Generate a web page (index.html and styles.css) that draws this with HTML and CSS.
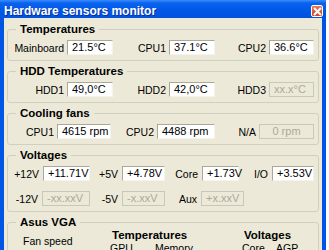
FILE: index.html
```html
<!DOCTYPE html>
<html lang="en">
  <head>
    <meta charset="UTF-8" />
    <title>Hardware sensors monitor</title>
    <link rel="stylesheet" href="styles.css">
  </head>

  <body>
    <div class="window">
      <!-- title bar -->
      <div class="titlebar">
        <span class="title">Hardware sensors monitor</span>
        <span class="close">
          <svg width="9" height="9" viewBox="0 0 9 9">
            <path d="M1 1 L8 8 M8 1 L1 8" stroke="#fff" stroke-width="2" />
          </svg>
        </span>
      </div>

      <div class="body">
        <fieldset class="group">
          <legend>Temperatures</legend>
          <div class="row temps">
            <span class="lbl">Mainboard</span><span class="val">21.5°C</span>
            <span class="lbl">CPU1</span><span class="val">37.1°C</span>
            <span class="lbl">CPU2</span><span class="val">36.6°C</span>
          </div>
        </fieldset>

        <fieldset class="group">
          <legend>HDD Temperatures</legend>
          <div class="row temps">
            <span class="lbl">HDD1</span><span class="val">49,0°C</span>
            <span class="lbl">HDD2</span><span class="val">42,0°C</span>
            <span class="lbl">HDD3</span><span class="val off">xx.x°C</span>
          </div>
        </fieldset>

        <fieldset class="group">
          <legend>Cooling fans</legend>
          <div class="row fans">
            <span class="lbl">CPU1</span><span class="val">4615 rpm</span>
            <span class="lbl">CPU2</span><span class="val">4488 rpm</span>
            <span class="lbl">N/A</span><span class="val off">0 rpm</span>
          </div>
        </fieldset>

        <fieldset class="group">
          <legend>Voltages</legend>
          <div class="row volts1">
            <span class="lbl">+12V</span><span class="val">+11.71V</span>
            <span class="lbl">+5V</span><span class="val">+4.78V</span>
            <span class="lbl">Core</span><span class="val">+1.73V</span>
            <span class="lbl">I/O</span><span class="val">+3.53V</span>
          </div>
          <div class="row volts2">
            <span class="lbl">-12V</span><span class="val off">-xx.xxV</span>
            <span class="lbl">-5V</span><span class="val off">-x.xxV</span>
            <span class="lbl">Aux</span><span class="val off">+x.xxV</span>
          </div>
        </fieldset>

        <fieldset class="group">
          <legend>Asus VGA</legend>
          <div class="vga">
            <div class="fan">Fan speed</div>
            <div class="vcol tcol">
              <div class="head">Temperatures</div>
              <div class="sub"><span>GPU</span><span>Memory</span></div>
            </div>
            <div class="vcol ccol">
              <div class="head">Voltages</div>
              <div class="sub"><span>Core</span><span>AGP</span></div>
            </div>
          </div>
        </fieldset>
      </div>
    </div>
  </body>
</html>
```

FILE: styles.css
```css
html,
body {
  margin: 0;
  padding: 0;
  overflow: hidden;
  background: #fff;
}

body {
  font-family: "Liberation Sans", Arial, sans-serif;
  font-size: 10.5px;
  color: #000;
}

.window {
  width: 326px;
  height: 250px;
  display: flex;
  flex-direction: column;
}

.titlebar {
  height: 18px;
  box-sizing: border-box;
  padding: 4px 3px 0 4px;
  display: flex;
  justify-content: space-between;
  align-items: flex-start;
  background: linear-gradient(to bottom, #3b8dfb 0, #0a62ee 3px, #0058e8 10px, #0052de 18px);
}

.title {
  color: #fff;
  font-weight: bold;
  font-size: 12px;
  line-height: 14px;
  text-shadow: 1px 1px 0 #0a2f9c;
}

.close {
  width: 12px;
  height: 12px;
  margin-top: 1px;
  box-sizing: border-box;
  border: 1px solid #fff;
  border-radius: 2px;
  background: linear-gradient(to bottom, #e8775a, #d8431e);
  display: flex;
  align-items: center;
  justify-content: center;
}

.close svg {
  display: block;
}

.body {
  flex: 1;
  background: #ece9d8;
  border-left: 4px solid #0055e5;
  border-right: 4px solid #0055e5;
  padding-top: 4px;
}

.group {
  margin: 0 3px 3px 3px;
  padding: 0 0 5px 0;
  min-inline-size: 0;
  border: 1px solid #d0d0bf;
  border-radius: 3px;
}

.group legend {
  margin-left: 8px;
  padding: 0 4px;
  font-weight: bold;
  font-size: 11.5px;
  line-height: 14px;
}

.row {
  display: grid;
  align-items: center;
  margin-top: 4px;
}

.row + .row {
  margin-top: 10px;
}

.temps {
  grid-template-columns: 59px 46px 56px 46px 54px 45px;
}

.fans {
  grid-template-columns: 49px 54px 46px 58px 44px 55px;
}

.volts1 {
  grid-template-columns: 35px 47px 32px 43px 37px 37px 33px 42px;
}

.volts2 {
  grid-template-columns: 34px 48px 32px 43px 36px 43px;
}

.lbl {
  text-align: right;
  padding-right: 3px;
  white-space: nowrap;
}

.volts1 .lbl,
.volts2 .lbl {
  padding-right: 4px;
}

.val {
  height: 15px;
  box-sizing: border-box;
  padding-left: 4px;
  font-size: 11px;
  line-height: 13px;
  white-space: nowrap;
  background: #fff;
  border: 1px solid;
  border-color: #aca899 #f4f3ee #f4f3ee #aca899;
}

.val.off {
  background: #ece9d8;
  color: #aca899;
  border-color: #c9c7ba;
}

.fans .val.off {
  padding-left: 0;
  text-align: center;
}

.vga {
  display: flex;
  height: 40px;
  padding-left: 15px;
}

.fan {
  width: 87px;
  margin-top: 6px;
}

.vcol .head {
  font-weight: bold;
  font-size: 11.5px;
  line-height: 13px;
  padding-left: 2px;
}

.vcol .sub {
  display: flex;
  margin-top: 0;
  line-height: 13px;
}

.tcol {
  width: 132px;
}

.tcol .sub span {
  width: 45px;
}

.ccol .sub span {
  width: 34px;
}
```
